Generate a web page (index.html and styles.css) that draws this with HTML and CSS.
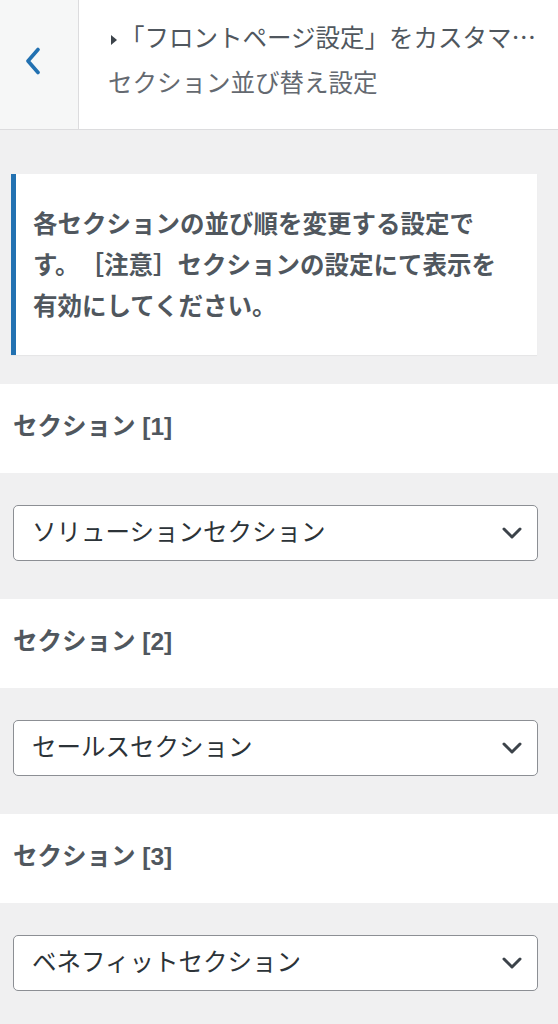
FILE: index.html
```html
<!DOCTYPE html>
<html lang="ja">
<head>
<meta charset="utf-8">
<title>セクション並び替え設定</title>
<link rel="stylesheet" href="styles.css">
</head>
<body>
<div class="panel">
  <header class="head">
    <button class="back" aria-label="戻る">
      <svg width="18" height="28" viewBox="0 0 18 28"><path d="M14 2.5 L4 14 L14 25.5" fill="none" stroke="#2271b1" stroke-width="3.6" stroke-linecap="round" stroke-linejoin="round"/></svg>
    </button>
    <div class="titles">
      <div class="crumb"><span class="tri"></span>「フロントページ設定」をカスタマイズ中</div>
      <h1 class="title">セクション並び替え設定</h1>
    </div>
  </header>

  <div class="notice">各セクションの並び順を変更する設定です。［注意］セクションの設定にて表示を有効にしてください。</div>

  <div class="control">
    <div class="label">セクション [1]</div>
    <div class="field">
      <div class="select"><span>ソリューションセクション</span><svg class="chev" width="20" height="12" viewBox="0 0 20 12"><path d="M2 2 L10 10 L18 2" fill="none" stroke="#3c434a" stroke-width="3" stroke-linecap="round" stroke-linejoin="round"/></svg></div>
    </div>
  </div>

  <div class="control">
    <div class="label">セクション [2]</div>
    <div class="field">
      <div class="select"><span>セールスセクション</span><svg class="chev" width="20" height="12" viewBox="0 0 20 12"><path d="M2 2 L10 10 L18 2" fill="none" stroke="#3c434a" stroke-width="3" stroke-linecap="round" stroke-linejoin="round"/></svg></div>
    </div>
  </div>

  <div class="control">
    <div class="label">セクション [3]</div>
    <div class="field">
      <div class="select"><span>ベネフィットセクション</span><svg class="chev" width="20" height="12" viewBox="0 0 20 12"><path d="M2 2 L10 10 L18 2" fill="none" stroke="#3c434a" stroke-width="3" stroke-linecap="round" stroke-linejoin="round"/></svg></div>
    </div>
  </div>
</div>
</body>
</html>
```

FILE: styles.css
```css
* { box-sizing: border-box; }
html, body { margin: 0; padding: 0; }
body {
  background: #f0f0f1;
  font-family: "Liberation Sans", "Noto Sans CJK JP", sans-serif;
  font-size: 24.5px;
  color: #50575e;
  text-spacing-trim: space-all;
}
.panel { width: 558px; }

.head {
  display: flex;
  height: 130px;
  background: #fff;
  border-bottom: 1px solid #dcdcde;
}
.back {
  width: 79px;
  flex: none;
  border: 0;
  border-right: 1px solid #dcdcde;
  background: #f6f7f7;
  display: flex;
  align-items: center;
  justify-content: center;
  padding: 0 12px 8px 0;
  margin: 0;
}
.titles {
  flex: 1;
  min-width: 0;
  padding: 17px 12px 0 29px;
}
.crumb {
  font-family: "Noto Sans CJK JP", sans-serif;
  line-height: 40px;
  height: 40px;
  white-space: nowrap;
  overflow: hidden;
  text-overflow: ellipsis;
  color: #50575e;
}
.tri {
  display: inline-block;
  width: 0;
  height: 0;
  border-left: 6px solid #3c434a;
  border-top: 5px solid transparent;
  border-bottom: 5px solid transparent;
  margin: 0 3px 0 3px;
  vertical-align: 2px;
}
.title {
  margin: 0;
  padding-top: 1px;
  font-family: "Noto Sans CJK JP", sans-serif;
  font-size: 24.5px;
  font-weight: 400;
  line-height: 48px;
  color: #646970;
}

.notice {
  margin: 44px 21px 29px 11px;
  background: #fff;
  border-left: 5px solid #2271b1;
  padding: 30px 22px 28px 17px;
  line-height: 41px;
  font-weight: 600;
  color: #50575e;
  box-shadow: 0 1px 1px rgba(0,0,0,0.04);
}

.label {
  background: #fff;
  height: 89px;
  padding: 0 13px 9px;
  display: flex;
  align-items: center;
  font-weight: 700;
  color: #50575e;
}
.field {
  padding: 32px 20px 38px 13px;
}
.select {
  height: 56px;
  background: #fff;
  border: 1px solid #8c8f94;
  border-radius: 5px;
  display: flex;
  align-items: center;
  justify-content: space-between;
  padding: 0 15px 0 18px;
  color: #2c3338;
}
.select span { margin-top: -5px; }
.chev { flex: none; }
```
